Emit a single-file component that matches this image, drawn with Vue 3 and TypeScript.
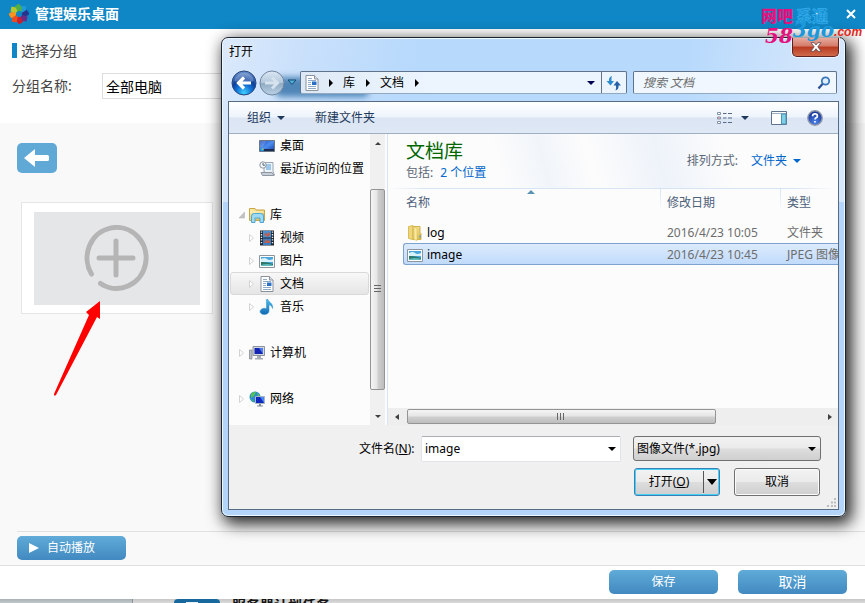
<script setup lang="ts">
import { ref } from 'vue'

interface TreeNode {
  label: string
  icon: string
  level: number
  state: 'open' | 'closed' | 'none'
  gapAfter?: boolean
}

interface FileRow {
  name: string
  icon: string
  date: string
  type: string
}

const tree: TreeNode[] = [
  { label: '桌面', icon: 'desktop', level: 2, state: 'none' },
  { label: '最近访问的位置', icon: 'recent', level: 2, state: 'none', gapAfter: true },
  { label: '库', icon: 'library', level: 1, state: 'open' },
  { label: '视频', icon: 'video', level: 2, state: 'closed' },
  { label: '图片', icon: 'picture', level: 2, state: 'closed' },
  { label: '文档', icon: 'document', level: 2, state: 'closed' },
  { label: '音乐', icon: 'music', level: 2, state: 'closed', gapAfter: true },
  { label: '计算机', icon: 'computer', level: 1, state: 'closed', gapAfter: true },
  { label: '网络', icon: 'network', level: 1, state: 'closed' },
]

const files: FileRow[] = [
  { name: 'log', icon: 'folder', date: '2016/4/23 10:05', type: '文件夹' },
  { name: 'image', icon: 'picture', date: '2016/4/23 10:45', type: 'JPEG 图像' },
]

const place = ref('文档')
const fileName = ref('image')
const groupName = ref('全部电脑')
const petals = [
  '#1f9ad8', '#27358c', '#6b2a86', '#c9202f', '#ef4b23', '#f7931e', '#b6c92c', '#4fae47',
]
</script>

<template>
  <div class="page">
    <svg class="defs" aria-hidden="true">
      <defs>
        <linearGradient id="gScreen" x1="0" y1="0" x2="1" y2="1">
          <stop offset="0" stop-color="#1c49b8" /><stop offset=".5" stop-color="#4d8df0" /><stop offset="1" stop-color="#123a9c" />
        </linearGradient>
        <linearGradient id="gFolder" x1="0" y1="0" x2="1" y2="1">
          <stop offset="0" stop-color="#fdf2b0" /><stop offset="1" stop-color="#d9b441" />
        </linearGradient>
        <linearGradient id="gNote" x1="0" y1="0" x2="0" y2="1">
          <stop offset="0" stop-color="#48c0ea" /><stop offset="1" stop-color="#1467b4" />
        </linearGradient>
        <radialGradient id="gBack" cx=".5" cy=".9" r=".9">
          <stop offset="0" stop-color="#3fd0ff" /><stop offset=".35" stop-color="#1374d8" /><stop offset=".6" stop-color="#0c3f9c" /><stop offset="1" stop-color="#6f95cf" />
        </radialGradient>
        <linearGradient id="gForward" x1="0" y1="0" x2="0" y2="1">
          <stop offset="0" stop-color="#dce8f4" /><stop offset=".48" stop-color="#b4c8dc" /><stop offset=".52" stop-color="#91abc3" /><stop offset="1" stop-color="#b9d2e6" />
        </linearGradient>
        <radialGradient id="gHelp" cx=".5" cy=".8" r=".8">
          <stop offset="0" stop-color="#4b84ec" /><stop offset="1" stop-color="#152c8e" />
        </radialGradient>
      </defs>
      <symbol id="desktop" viewBox="0 0 16 16">
        <path d="M.5 2.500h15v11H.5z" fill="url(#gScreen)" stroke="#6d7683" />
        <path d="M1 11h14v2H1z" fill="#1a2c52" /><path d="M1 3h6l-3 6-3 1z" fill="#fff" opacity=".18" />
        <circle cx="3" cy="11.500" r="2" fill="#2b9ae0" /><path d="M3 10.500h1.400v1H3z" fill="#ffd34e" />
      </symbol>
      <symbol id="recent" viewBox="0 0 16 16">
        <path d="M5 1.500h9v9l1.500 3.500H7l-1-3H5z" fill="#edf3f9" stroke="#9aa4b0" />
        <path d="M7 4h5M7 6h5M7 8h5" stroke="#4d9cdb" /><path d="M2 11.500h11l2 3H3.500z" fill="#c8ced5" stroke="#8e98a3" />
        <circle cx="4" cy="4" r="3.200" fill="#f4f6f8" stroke="#8e98a3" /><path d="M4 2v2.200h2" fill="none" stroke="#596573" />
      </symbol>
      <symbol id="library" viewBox="0 0 16 16">
        <path d="M.5 13.500v-12H6l1 1.500h8.500v10.500z" fill="url(#gFolder)" stroke="#c9a546" /><path d="M1 5h14" stroke="#fff6cc" />
        <path d="M2.500 15.500V9q0-2.500 3-2.500h6q3 0 3 2.500v6.500H11V11H6v4.500z" fill="#9fdaf5" stroke="#4fa7d4" />
      </symbol>
      <symbol id="video" viewBox="0 0 16 16">
        <path d="M1 .5h14v15H1z" fill="#23272e" /><path d="M4 1h8v6.500H4z" fill="#4593dc" /><path d="M4 8.500h8V15H4z" fill="#377fc9" />
        <path d="M5 5l2-3 1 2 3-2v3L9 7zM5 13l2-4 2 2 2-1v3z" fill="#b9604f" />
        <path d="M2.500 1.500v13M13.500 1.500v13" stroke="#e8eef2" stroke-width="1.400" stroke-dasharray="1.300 1.300" />
      </symbol>
      <symbol id="picture" viewBox="0 0 16 16">
        <path d="M.5 2.500h15v12H.5z" fill="#fff" stroke="#8d949c" /><path d="M2 4h12v9H2z" fill="#4ba6de" />
        <path d="M2 6q4-2 6 0t6 0v3H2z" fill="#d8f2fb" /><path d="M2 9q5-.5 12 2v2H2z" fill="#2c7868" /><path d="M2 12q6-2 12 0v1H2z" fill="#5db9bc" />
      </symbol>
      <symbol id="document" viewBox="0 0 16 16">
        <path d="M2 .5h8.500L14 4v11.500H2z" fill="#fff" stroke="#8b929c" /><path d="M10.500.5V4H14" fill="#dfe5ec" stroke="#8b929c" />
        <path d="M4 3.500h4M4 5.500h8M4 7.500h3M4 9.500h3M4 11.500h8M4 13.500h8" stroke="#8eacc9" /><path d="M8 6.500h4.500V10H8z" fill="#2a6fc8" />
      </symbol>
      <symbol id="music" viewBox="0 0 16 16">
        <path d="M7.500.5H9c.5 3 5.500 3.500 4.500 9C12.800 7 11.500 6 10 5.800V12c0 2-2 3.500-4.700 3.500S1 14 1 12.500s2-3.300 4.500-3.300c.8 0 1.500.2 2 .5z" fill="url(#gNote)" stroke="#2b8cc8" stroke-width=".5" />
      </symbol>
      <symbol id="computer" viewBox="0 0 16 16">
        <path d="M.5 5h2.500v9H.5z" fill="#b9bec4" stroke="#7b828a" stroke-width=".7" /><path d="M4 1.500h11.500v9H4z" fill="#d4d9df" stroke="#8a929b" />
        <path d="M5.500 3H14v6H5.500z" fill="#1425b4" /><path d="M10 3h4v6z" fill="#527cf0" /><path d="M8 11h4v2h2v1.500H6V13h2z" fill="#a4abb3" />
      </symbol>
      <symbol id="network" viewBox="0 0 16 16">
        <circle cx="6" cy="6" r="5.500" fill="#2a8ad4" /><path d="M2 3q3-3 5-2L5 5 2 7zM1 8l3 1 1 2zM8 2l3 2-2 2z" fill="#55c44c" />
        <path d="M6.500 5.500h9v7h-9z" fill="#1228bc" stroke="#aab6c4" /><path d="M11 6h4v6z" fill="#4a86f2" /><path d="M10 13h2v1.500h2v1H8v-1h2z" fill="#7f8a96" />
      </symbol>
      <symbol id="folder" viewBox="0 0 16 16">
        <path d="M1.500 1.500 6 .5v14l-4.500-1z" fill="#efd779" stroke="#d9bd5b" /><path d="M6 1.500h7v6l1 1v6H6z" fill="url(#gFolder)" stroke="#d2b24c" />
        <path d="M7 2l3 1v12.500l-3-1z" fill="#f9eaa0" stroke="#dabc55" stroke-width=".6" /><path d="M13 10v3" stroke="#4e9ad2" />
      </symbol>
    </svg>

    <header class="app-bar">
      <svg class="logo" viewBox="0 0 20 20" aria-hidden="true">
        <path v-for="(c, i) in petals" :key="c" :fill="c" :transform="`rotate(${i * 45} 10 10)`" d="M11 7.500 12.500 1.500 17.500 2.500 16.500 7.500 13.500 10z" />
        <circle cx="10" cy="10" r="3" fill="#0f86c5" />
      </svg>
      <h1>管理娱乐桌面</h1>
      <button class="bar-btn" type="button" aria-label="最小化"><svg viewBox="0 0 12 12"><path d="M1 6h10" /></svg></button>
      <button class="bar-btn" type="button" aria-label="关闭"><svg viewBox="0 0 12 12"><path d="M2 2l8 8M10 2l-8 8" /></svg></button>
    </header>

    <section class="group">
      <h2>选择分组</h2>
      <div class="group-row">
        <label for="group">分组名称:</label>
        <input id="group" v-model="groupName" type="text" />
      </div>
    </section>

    <main class="work">
      <button class="back" type="button" aria-label="返回">
        <svg viewBox="0 0 26 18"><path d="M0 9 11 0v6h12.500q1.500 0 1.500 1.500v3q0 1.500-1.500 1.500H11v6z" fill="#fff" /></svg>
      </button>
      <div class="card">
        <button class="add" type="button" aria-label="添加">
          <svg viewBox="0 0 66 68"><path d="M7.500 49A29.500 30.500 0 1 1 16.500 58.500M32 16v34M15 33h34" /></svg>
        </button>
      </div>
      <div class="play-row">
        <button class="blue play" type="button">
          <svg viewBox="0 0 10 10"><path d="M0 0l10 5-10 5z" fill="#fff" /></svg>自动播放
        </button>
      </div>
    </main>

    <footer class="actions">
      <button class="blue" type="button">保存</button>
      <button class="blue large" type="button">取消</button>
    </footer>

    <div class="behind">
      <span class="behind-side"></span><span class="behind-icon"></span><b>服务器计划任务</b>
    </div>

    <svg class="pointer" viewBox="0 0 48 98" aria-hidden="true"><path d="M47 1v18l-3-2L3 95q-2 2-2-1L36 15l-3-3z" fill="#fe0000" /></svg>

    <div class="dialog" role="dialog" aria-label="打开">
      <div class="caption"><span>打开</span></div>
      <button class="dialog-close" type="button" aria-label="关闭">
        <svg viewBox="0 0 12 10"><path d="M1 .7h3.200L6 3 7.800.7H11L7.800 4.800 11.200 9.300H8L6 6.800 4 9.300H.8L4.200 4.800z" fill="#fff" stroke="#5c4a52" stroke-width=".8" /></svg>
      </button>

      <div class="nav">
        <button class="round" type="button" aria-label="后退">
          <svg viewBox="0 0 26 26"><circle cx="13" cy="13" r="12" fill="url(#gBack)" stroke="#29477c" /><path d="M3.500 11a9.600 9.600 0 0 1 19 0q-9 3-19 0z" fill="#fff" opacity=".25" /><path d="M20 13H8M13 7.500 7.500 13l5.500 5.500" fill="none" stroke="#fff" stroke-width="3.200" /></svg>
        </button>
        <button class="round" type="button" aria-label="前进">
          <svg viewBox="0 0 26 26"><circle cx="13" cy="13" r="12" fill="url(#gForward)" stroke="#71869e" /><path d="M6 13h12M13 7.500l5.500 5.500-5.500 5.500" fill="none" stroke="#d6e2ee" stroke-width="3" /></svg>
        </button>
        <button class="history" type="button" aria-label="最近页面"><svg viewBox="0 0 10 7"><path d="M1 1h8L5 5.500z" fill="#49b2dc" stroke="#1d4a72" /></svg></button>
        <div class="address">
          <svg class="icon"><use href="#document" /></svg>
          <i class="tri right"></i><a href="#lib">库</a><i class="tri right"></i><a href="#doc">文档</a><i class="tri right"></i>
          <button class="drop" type="button" aria-label="展开地址"><i class="tri down"></i></button>
          <button class="refresh" type="button" aria-label="刷新">
            <svg viewBox="0 0 16 16"><path d="M6 1Q2.500 2 3 6H.5L4.500 10.500 8 6H5.500Q5 3 6 1z" fill="#2c8bd0" /><path d="M9.500 15.500Q13 14.500 12.500 10.500H15L11 6 7.500 10.500H10q.5 3-.5 5z" fill="#2561a8" /></svg>
          </button>
        </div>
        <div class="search">
          <input type="text" placeholder="搜索 文档" aria-label="搜索 文档" />
          <svg viewBox="0 0 14 14"><circle cx="8.500" cy="5" r="3.700" fill="#dff0fc" stroke="#3b78bd" stroke-width="1.800" /><path d="M5.500 8 1.500 12.500" stroke="#274f96" stroke-width="2.200" /></svg>
        </div>
      </div>

      <div class="client">
        <div class="toolbar">
          <button type="button">组织<i class="tri down"></i></button>
          <button type="button">新建文件夹</button>
          <span class="spring"></span>
          <button type="button" class="view" aria-label="更改视图">
            <svg class="icon" viewBox="0 0 16 16"><path d="M1.500 2.500h3v2h-3zM1.500 7h3v2h-3zM1.500 11.500h3v2h-3z" fill="#fff" stroke="#8292a6" /><path d="M7 3.500h3.500M12 3.500h4M7 8h3.500M12 8h4M7 12.500h3.500M12 12.500h4" stroke="#556a86" /><path d="M2.500 7.500h1v1h-1z" fill="#d33" /></svg>
            <i class="tri down"></i>
          </button>
          <button type="button" aria-label="预览窗格">
            <svg class="icon" viewBox="0 0 16 16"><path d="M.5 1.500h15v13H.5z" fill="#fff" stroke="#5d7390" /><path d="M1 3.500h14" stroke="#9bb0c8" /><path d="M10.500 4v10h4.500V4z" fill="#7fd0e6" stroke="#4b93b1" /></svg>
          </button>
          <button type="button" aria-label="帮助">
            <svg class="icon" viewBox="0 0 16 16"><circle cx="8" cy="8" r="7.200" fill="url(#gHelp)" stroke="#8f98a8" stroke-width="1.400" /><path d="M5.600 6.200q0-2.300 2.400-2.300t2.400 2q0 1.100-1.200 1.800Q8 8.400 8 9.500M8 11v1.600" fill="none" stroke="#fff" stroke-width="1.700" /></svg>
          </button>
        </div>

        <div class="panes">
          <ul class="tree">
            <li v-for="n in tree" :key="n.label" :class="['node', 'l' + n.level, { gap: n.gapAfter }]">
              <a :href="'#' + n.icon" :class="{ on: n.label === place }">
                <svg class="twist" viewBox="0 0 8 10">
                  <path v-if="n.state === 'closed'" d="M1.500 1.500 5.500 5l-4 3.500z" fill="#fff" stroke="#d3d3d3" />
                  <path v-else-if="n.state === 'open'" d="M6.500 2v6H1z" fill="#c2c2c2" stroke="#b0b0b0" stroke-width=".5" />
                </svg>
                <svg class="icon"><use :href="'#' + n.icon" /></svg>{{ n.label }}
              </a>
            </li>
          </ul>
          <div class="vbar"><i class="tri up"></i><span class="before"></span><span class="thumb"></span><span class="after"></span><i class="tri down"></i></div>

          <div class="files">
            <div class="lib-head">
              <div><h3>文档库</h3><p>包括: <a href="#places">2 个位置</a></p></div>
              <p class="sort">排列方式: <button type="button">文件夹<i class="tri down"></i></button></p>
            </div>
            <div class="list">
              <table>
                <colgroup><col /><col class="c-date" /><col class="c-type" /></colgroup>
                <thead>
                  <tr>
                    <th>名称<svg class="asc" viewBox="0 0 8 4"><path d="M4 0l4 4H0z" fill="#5c93b5" /></svg></th>
                    <th>修改日期</th>
                    <th>类型</th>
                  </tr>
                </thead>
                <tbody>
                  <tr v-for="f in files" :key="f.name" :class="{ picked: f.name === fileName }">
                    <td><span class="fname"><svg class="icon"><use :href="'#' + f.icon" /></svg>{{ f.name }}</span></td>
                    <td>{{ f.date }}</td>
                    <td>{{ f.type }}</td>
                  </tr>
                </tbody>
              </table>
            </div>
            <div class="hbar"><i class="tri left"></i><span class="thumb"></span><span class="track"></span><i class="tri right"></i></div>
          </div>
        </div>

        <form class="bottom" @submit.prevent>
          <label for="fname">文件名(<u>N</u>):</label>
          <div class="combo">
            <input id="fname" v-model="fileName" type="text" />
            <button type="button" aria-label="文件名列表"><i class="tri down"></i></button>
          </div>
          <div class="right-col">
            <div class="filter">
              <select aria-label="文件类型"><option>图像文件(*.jpg)</option></select><i class="tri down"></i>
            </div>
            <div class="btns">
              <div class="split"><button type="submit">打开(<u>O</u>)</button><button type="button" class="more" aria-label="打开方式"><i class="tri down"></i></button></div>
              <button type="button" class="win">取消</button>
            </div>
          </div>
          <svg class="grip" viewBox="0 0 9 9" aria-hidden="true"><path d="M7 0h2v2H7zM4 3.500h2v2H4zM7 3.500h2v2H7zM0 7h2v2H0zM4 7h2v2H4zM7 7h2v2H7z" fill="#bdbdbd" /></svg>
        </form>
      </div>
    </div>

    <div class="mark" aria-hidden="true">
      <div class="mark-top"><span class="m1">网吧</span><span class="m2">系通</span></div>
      <div class="mark-url"><span class="m3">58</span><span class="m4">3go</span><span class="m5">.com</span></div>
    </div>
  </div>
</template>

<style>
body {
  margin: 0;
}
</style>

<style scoped>
* {
  box-sizing: border-box;
}
.page {
  position: relative;
  display: flex;
  flex-direction: column;
  min-height: 100vh;
  overflow: hidden;
  background: #fff;
  color: #444;
  font: 12px/16px "Noto Sans", "Noto Sans CJK SC", sans-serif;
}
h1, h2, h3, p, ul {
  margin: 0;
  padding: 0;
}
button, input, select {
  margin: 0;
  padding: 0;
  border: 0;
  background: none;
  color: inherit;
  font: inherit;
}
button {
  display: flex;
  align-items: center;
  justify-content: center;
}
a {
  color: inherit;
  text-decoration: none;
}
svg {
  display: block;
  flex: none;
}
.defs {
  position: absolute;
  width: 0;
  height: 0;
}
.icon {
  width: 16px;
  height: 16px;
}
.tri {
  flex: none;
  width: 0;
  height: 0;
  border: 4px solid transparent;
}
.tri.down {
  border-top-color: currentColor;
  border-bottom: 0;
}
.tri.up {
  border-bottom-color: currentColor;
  border-top: 0;
}
.tri.right {
  border-left-color: currentColor;
  border-right: 0;
}
.tri.left {
  border-right-color: currentColor;
  border-left: 0;
}

/* application window */
.app-bar {
  display: flex;
  align-items: center;
  height: 29px;
  padding: 0 8px 2px 9px;
  background: #0f86c5;
  color: #fff;
}
.logo {
  width: 20px;
  height: 20px;
}
.app-bar h1 {
  flex: 1;
  margin-left: 6px;
  font-size: 14px;
  line-height: 20px;
}
.bar-btn {
  width: 12px;
  height: 20px;
  margin-left: 18px;
}
.bar-btn svg {
  width: 12px;
  height: 12px;
  stroke: #fff;
  stroke-width: 2;
}
.group {
  height: 94px;
  padding: 14px 12px 0;
  font-size: 14px;
}
.group h2 {
  padding-left: 4px;
  border-left: 5px solid #0f86c5;
  font-size: 14px;
  font-weight: 400;
  line-height: 15px;
}
.group-row {
  display: flex;
  align-items: center;
  margin-top: 15px;
}
.group-row label {
  width: 90px;
}
.group-row input {
  width: 240px;
  height: 26px;
  padding: 0 3px;
  border: 1px solid #ddd;
  background: #fff;
  color: #000;
}
.work {
  display: flex;
  flex: 1;
  flex-direction: column;
  align-items: flex-start;
  padding: 20px 0 0 17px;
  border-bottom: 1px solid #e0e0e0;
  background: #f9f9f9;
}
.back {
  width: 40px;
  height: 30px;
  border-radius: 5px;
  background: #60a8d6;
}
.back svg {
  width: 26px;
  height: 18px;
}
.card {
  margin: 29px 0 0 4px;
  padding: 9px 12px 8px;
  border: 1px solid #e5e5e5;
  background: #fff;
}
.add {
  width: 166px;
  height: 93px;
  background: #e5e6e8;
}
.add svg {
  width: 66px;
  height: 68px;
  fill: none;
  stroke: #b5b5b5;
  stroke-width: 5;
  stroke-linecap: round;
}
.play-row {
  align-self: stretch;
  margin-top: auto;
  padding: 4px 0 5px;
  border-top: 1px solid #e0e0e0;
}
.blue {
  width: 109px;
  height: 24px;
  border-radius: 5px;
  background: linear-gradient(#60abd8, #4189c0);
  color: #fff;
}
.blue.large {
  font-size: 14px;
}
.play {
  justify-content: flex-start;
  gap: 8px;
  padding-left: 12px;
}
.play svg {
  width: 10px;
  height: 10px;
}
.actions {
  display: flex;
  justify-content: flex-end;
  gap: 20px;
  padding: 4px 18px 5px;
}
.behind {
  display: flex;
  height: 4px;
  overflow: hidden;
  background: linear-gradient(#c6c6c6, #dadada);
  color: #151515;
}
.behind-side {
  width: 133px;
  border-right: 1px solid #8d9296;
  background: linear-gradient(#a9b0b4, #c3cace);
}
.behind-icon {
  width: 46px;
  margin: 0 12px 0 41px;
  border-radius: 8px 8px 0 0;
  background: linear-gradient(#e6f0f6, #e6f0f6) 12px 3px / 12px 1px no-repeat #17699d;
}
.behind b {
  font-size: 14px;
  line-height: 11px;
}
.pointer {
  position: absolute;
  top: 300px;
  left: 53px;
  width: 48px;
  height: 98px;
}

/* file dialog */
.dialog {
  position: absolute;
  top: 37px;
  right: 19px;
  left: 221px;
  padding: 0 6px 6px;
  border: 1px solid #1b2531;
  border-radius: 7px;
  background:
    linear-gradient(transparent 164px, #b3d5fa 164px),
    linear-gradient(100deg, #dbe9fb, #c9e0fb 12%, #b7d9fc 28%, #b7d9fc 66%, #d3e6fc 84%, #d9e9fb);
  box-shadow: inset 0 0 0 1px #eef7ff, 4px 5px 16px 2px rgba(0, 0, 0, .85);
  color: #000;
}
.caption {
  height: 32px;
  padding: 6px 0 0 1px;
}
.caption span {
  text-shadow: 0 0 8px #fff;
}
.dialog-close {
  position: absolute;
  top: 0;
  right: 6px;
  width: 47px;
  height: 19px;
  border: 1px solid #5b2323;
  border-top: 0;
  border-radius: 0 0 5px 5px;
  background: linear-gradient(#e7aa9c, #d57b68 45%, #b93a21 50%, #cf6a4a);
  box-shadow: 0 0 0 1px rgba(255, 255, 255, .6);
}
.dialog-close svg {
  width: 12px;
  height: 10px;
}
.nav {
  position: relative;
  display: flex;
  align-items: center;
  height: 25px;
  margin: 0 2px 6px 3px;
}
.nav::before {
  position: absolute;
  top: 7px;
  left: 44px;
  width: 94px;
  height: 20px;
  border-radius: 6px;
  background: #4f86b8;
  filter: blur(3px);
  content: "";
}
.nav > * {
  position: relative;
}
.round {
  width: 26px;
  height: 26px;
  margin-right: 2px;
}
.round svg {
  width: 26px;
  height: 26px;
}
.history {
  width: 10px;
  margin-right: 3px;
}
.history svg {
  width: 10px;
  height: 7px;
}
.address {
  display: flex;
  flex: 324;
  align-items: center;
  height: 23px;
  padding-left: 3px;
  border: 1px solid #60738a;
  border-bottom-color: #93a9c0;
  border-radius: 2px;
  background: linear-gradient(90deg, #dce8f5, #e6f0fb 20%, #ecf5fe 40%);
}
.address .tri {
  margin: 0 10px 0 11px;
}
.address .icon + .tri {
  margin-left: 9px;
}
.drop {
  width: 20px;
  height: 21px;
  margin-left: auto;
  color: #000050;
}
.address .drop .tri {
  margin: 0;
}
.refresh {
  width: 25px;
  height: 21px;
  border-left: 1px solid #60738a;
}
.refresh svg {
  width: 16px;
  height: 16px;
}
.search {
  display: flex;
  flex: 186;
  align-items: center;
  height: 23px;
  margin-left: 6px;
  padding: 0 5px 0 9px;
  border: 1px solid #60738a;
  border-bottom-color: #93a9c0;
  border-radius: 2px;
  background: #f0f7fe;
}
.search input {
  flex: 1;
  min-width: 0;
}
.search input::placeholder {
  color: #6d6d6d;
  font-style: italic;
  opacity: 1;
}
.search svg {
  width: 14px;
  height: 14px;
}
.client {
  border: 1px solid #586b82;
  background: #f0f0f0;
}
.toolbar {
  display: flex;
  align-items: center;
  height: 32px;
  padding: 0 15px 0 18px;
  border-bottom: 1px solid #a0afc3;
  background: linear-gradient(#fff, #eef4fc 48%, #dbe5f3 52%, #dfe9f6);
  color: #1e395b;
}
.toolbar button {
  gap: 6px;
}
.toolbar button + button {
  margin-left: 30px;
}
.toolbar .spring + button {
  gap: 9px;
}
.toolbar .view + button {
  margin-left: 22px;
}
.toolbar .view + button + button {
  margin-left: 20px;
}
.spring {
  flex: 1;
}
.panes {
  display: flex;
  height: 291px;
  background: #fcfcfc;
}
.tree {
  flex: none;
  width: 141px;
  list-style: none;
}
.node {
  padding: 0 1px;
  white-space: nowrap;
}
.node.gap {
  padding-bottom: 23px;
}
.node a {
  display: flex;
  align-items: center;
  height: 23px;
  border: 1px solid transparent;
  border-radius: 3px;
}
.node.l1 a {
  padding-left: 7px;
}
.node.l2 a {
  padding-left: 17px;
}
.node a.on {
  border-color: #d9d9d9;
  background: linear-gradient(#f8f8f8, #e5e5e5);
}
.node .icon {
  margin-right: 5px;
}
.twist {
  width: 8px;
  height: 10px;
  margin-right: 3px;
}
.vbar {
  display: flex;
  flex: none;
  flex-direction: column;
  align-items: center;
  width: 15px;
  padding: 8px 0 7px;
  background: #f0f0f0;
  color: #404040;
}
.vbar .tri {
  border-width: 3px;
}
.vbar .before {
  flex: 44;
}
.vbar .thumb {
  flex: 200;
  width: 15px;
  border: 1px solid #949494;
  border-radius: 2px;
  background:
    repeating-linear-gradient(#666 0 1px, transparent 1px 3px) center / 7px 9px no-repeat,
    linear-gradient(90deg, #f5f5f5, #e6e6e6 45%, #cfcfcf 55%, #bdbdbd);
}
.vbar .after {
  flex: 25;
}
.files {
  display: flex;
  flex: 1;
  flex-direction: column;
  min-width: 0;
  margin-left: 2px;
  border-left: 1px solid #d6e5f5;
}
.lib-head {
  display: flex;
  justify-content: space-between;
  height: 54px;
  padding: 5px 37px 0 18px;
  background: linear-gradient(75deg, #fcfcfc 25%, #f1f5fa 35%, #fcfcfc 45%, #eef3fa 60%, #fcfcfc 75%);
}
.lib-head h3 {
  color: #006600;
  font-size: 19px;
  font-weight: 400;
  line-height: 24px;
}
.lib-head p {
  line-height: 20px;
  color: #5a6675;
}
.lib-head a, .sort button {
  color: #0066cc;
}
.lib-head a {
  margin-left: 4px;
}
.lib-head .sort {
  display: flex;
  gap: 13px;
  align-self: flex-start;
  margin-top: 12px;
}
.sort button {
  gap: 6px;
}
.list {
  flex: 1;
  overflow: hidden;
  padding-left: 15px;
  background: linear-gradient(90deg, #fcfcfc, #d6e5f5 8%, #d6e5f5 90%, #fcfcfc) top / 100% 1px no-repeat;
}
table {
  width: 100%;
  border-spacing: 0;
  table-layout: fixed;
}
.c-date {
  width: 120px;
}
.c-type {
  width: 58px;
}
th {
  position: relative;
  height: 33px;
  padding: 0 0 0 7px;
  background: linear-gradient(#d6e5f5, #fcfcfc) left 1px / 1px 23px no-repeat;
  color: #4c607a;
  font-weight: 400;
  line-height: 29px;
  text-align: left;
  vertical-align: top;
}
th:first-child {
  padding-left: 3px;
  background: none;
}
.asc {
  position: absolute;
  top: 2px;
  left: 50%;
  width: 8px;
  height: 4px;
  margin-left: -5px;
}
td {
  height: 22px;
  padding: 1px 0 0 7px;
  border: solid transparent;
  border-width: 1px 0;
  color: #6d6d6d;
  line-height: 19px;
  white-space: nowrap;
}
td:first-child {
  padding-left: 3px;
  border-left-width: 1px;
  border-radius: 3px 0 0 3px;
  color: #000;
}
.fname {
  display: flex;
  gap: 4px;
  align-items: center;
}
.picked td {
  border-color: #7da2ce;
  background: linear-gradient(#dcebfc, #c1dbfc);
}
.hbar {
  display: flex;
  align-items: center;
  height: 17px;
  padding: 0 6px 0 7px;
  background: #eee;
  color: #404040;
}
.hbar .tri {
  border-top-width: 3px;
  border-bottom-width: 3px;
}
.hbar .thumb {
  flex: 308;
  height: 15px;
  margin-left: 8px;
  border: 1px solid #949494;
  border-radius: 2px;
  background:
    repeating-linear-gradient(90deg, #666 0 1px, transparent 1px 3px) center / 9px 7px no-repeat,
    linear-gradient(#f5f5f5, #e6e6e6 45%, #cfcfcf 55%, #bdbdbd);
}
.hbar .track {
  flex: 112;
}
.bottom {
  position: relative;
  display: flex;
  padding: 11px 17px 13px 130px;
}
.bottom label {
  flex: none;
  width: 62px;
  line-height: 25px;
}
.combo {
  display: flex;
  flex: 1;
  align-items: center;
  height: 26px;
  border: 1px solid #dfe3ea;
  border-top-color: #abadb3;
  border-radius: 2px;
  background: #fff;
}
.combo input {
  flex: 1;
  min-width: 0;
  padding-left: 3px;
}
.combo button {
  width: 17px;
  height: 24px;
}
.right-col {
  flex: none;
  width: 188px;
  margin-left: 12px;
}
.filter {
  display: grid;
  align-items: center;
  height: 25px;
  border: 1px solid #707070;
  border-radius: 3px;
  background: linear-gradient(#f2f2f2, #ebebeb 48%, #dddddd 52%, #cfcfcf);
}
.filter > * {
  grid-area: 1 / 1;
}
.filter select {
  width: 100%;
  height: 23px;
  padding-left: 3px;
  appearance: none;
}
.filter .tri {
  justify-self: end;
  margin-right: 4px;
  pointer-events: none;
}
.btns {
  display: flex;
  gap: 14px;
  margin-top: 7px;
  padding: 0 1px;
}
.split, .win {
  width: 86px;
  height: 28px;
  border: 1px solid #707070;
  border-radius: 3px;
  background: linear-gradient(#f2f2f2, #ebebeb 48%, #dddddd 52%, #cfcfcf);
  box-shadow: inset 0 0 0 1px #fcfcfc;
}
.split {
  display: flex;
  border-color: #3c7fb1;
  box-shadow: inset 0 0 0 1px #45d0f5;
}
.split button {
  flex: 1;
}
.split .more {
  flex: none;
  width: 16px;
  height: 22px;
  margin: 2px 0;
  border-left: 1px solid #555;
}
.more .tri {
  border-width: 6px 5px 0;
}
.grip {
  position: absolute;
  right: 2px;
  bottom: 2px;
  width: 9px;
  height: 9px;
}

/* site mark over the corner */
.mark {
  position: absolute;
  top: 6px;
  right: 4px;
  width: 100px;
  font-weight: 700;
  white-space: nowrap;
}
.mark-top {
  display: flex;
  gap: 3px;
  font-size: 16px;
  line-height: 20px;
}
.m1 {
  color: #e4127e;
  font-weight: 900;
}
.m2 {
  color: #0f86c5;
  -webkit-text-stroke: 1px #2fa8e8;
}
.mark-url {
  display: flex;
  align-items: flex-start;
  margin-top: -5px;
  padding-left: 4px;
  font: italic 700 20px/18px "DejaVu Serif", serif;
}
.m3 {
  padding-top: 6px;
  color: #e4127e;
}
.m4 {
  color: #1c98dc;
}
.m5 {
  color: #e02a20;
  font: italic 700 12px/22px "Liberation Sans", sans-serif;
}
</style>
